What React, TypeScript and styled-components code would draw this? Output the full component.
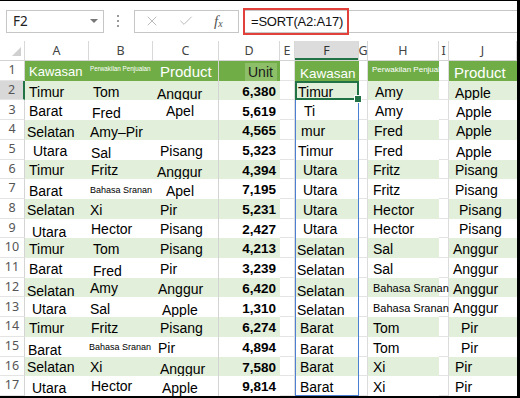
import React from 'react';
import styled, { createGlobalStyle, css } from 'styled-components';
import { X, Check } from 'lucide-react';

const GlobalStyle = createGlobalStyle`
  html, body { margin: 0; padding: 0; background: #fff; }
  body { font-family: 'Liberation Sans', Arial, sans-serif; }
  * { box-sizing: border-box; }
`;

const COLS = '25px 64px 64px 66px 61px 15px 64px 9px 71px 10px 68px';
const HEAD_GREEN = '#70ad47';
const BAND_GREEN = '#e2efda';
const XL_GREEN = '#217346';
const SPILL_BLUE = '#4a7fd4';

type Spec = { t: string; x?: number; dy?: number; size?: number };
type LeftRow = { a: Spec; b: Spec; c: Spec; d: string };
type RightRow = { f: Spec; h: Spec; j: Spec };

const leftRows: LeftRow[] = [
  { a: { t: 'Timur', x: 4 }, b: { t: 'Tom', x: 4 }, c: { t: 'Anggur', x: 4, dy: 2 }, d: '6,380' },
  { a: { t: 'Barat', x: 4 }, b: { t: 'Fred', x: 3, dy: 2 }, c: { t: 'Apel', x: 13 }, d: '5,619' },
  { a: { t: 'Selatan', x: 2, dy: 1 }, b: { t: 'Amy–Pir', x: 1, dy: 1 }, c: { t: '' }, d: '4,565' },
  { a: { t: 'Utara', x: 8 }, b: { t: 'Sal', x: 2, dy: 2 }, c: { t: 'Pisang', x: 7 }, d: '5,323' },
  { a: { t: 'Timur', x: 4 }, b: { t: 'Fritz', x: 2 }, c: { t: 'Anggur', x: 4, dy: 2 }, d: '4,394' },
  { a: { t: 'Barat', x: 4, dy: 1 }, b: { t: 'Bahasa Sranan', x: 1, size: 9 }, c: { t: 'Apel', x: 13, dy: 1 }, d: '7,195' },
  { a: { t: 'Selatan', x: 2 }, b: { t: 'Xi', x: 1 }, c: { t: 'Pir', x: 7 }, d: '5,231' },
  { a: { t: 'Utara', x: 7, dy: 2 }, b: { t: 'Hector', x: 2 }, c: { t: 'Pisang', x: 7 }, d: '2,427' },
  { a: { t: 'Timur', x: 4 }, b: { t: 'Tom', x: 4 }, c: { t: 'Pisang', x: 7 }, d: '4,213' },
  { a: { t: 'Barat', x: 4 }, b: { t: 'Fred', x: 4, dy: 2 }, c: { t: 'Pir', x: 7 }, d: '3,239' },
  { a: { t: 'Selatan', x: 2, dy: 2 }, b: { t: 'Amy', x: 1, dy: -1 }, c: { t: 'Anggur', x: 5 }, d: '6,420' },
  { a: { t: 'Utara', x: 7, dy: 1 }, b: { t: 'Sal', x: 1, dy: 1 }, c: { t: 'Apple', x: 9, dy: 2 }, d: '1,310' },
  { a: { t: 'Timur', x: 4 }, b: { t: 'Fritz', x: 2 }, c: { t: 'Pisang', x: 7 }, d: '6,274' },
  { a: { t: 'Barat', x: 3, dy: 2 }, b: { t: 'Bahasa Sranan', x: 0, size: 9 }, c: { t: 'Pir', x: 5 }, d: '4,894' },
  { a: { t: 'Selatan', x: 2 }, b: { t: 'Xi', x: 1 }, c: { t: 'Anggur', x: 7, dy: 2 }, d: '7,580' },
  { a: { t: 'Utara', x: 7, dy: 1 }, b: { t: 'Hector', x: 2, dy: -1 }, c: { t: 'Apple', x: 9, dy: 1 }, d: '9,814' },
];

const rightRows: RightRow[] = [
  { f: { t: 'Timur', x: 3 }, h: { t: 'Amy', x: 7 }, j: { t: 'Apple', x: 6, dy: 1 } },
  { f: { t: 'Ti', x: 9 }, h: { t: 'Amy', x: 7 }, j: { t: 'Apple', x: 7, dy: 1 } },
  { f: { t: 'mur', x: 6 }, h: { t: 'Fred', x: 6 }, j: { t: 'Apple', x: 7 } },
  { f: { t: 'Timur', x: 3 }, h: { t: 'Fred', x: 6 }, j: { t: 'Apple', x: 7, dy: 1 } },
  { f: { t: 'Utara', x: 8 }, h: { t: 'Fritz', x: 5 }, j: { t: 'Pisang', x: 6 } },
  { f: { t: 'Utara', x: 8 }, h: { t: 'Fritz', x: 5 }, j: { t: 'Pisang', x: 6 } },
  { f: { t: 'Utara', x: 8 }, h: { t: 'Hector', x: 5 }, j: { t: 'Pisang', x: 10 } },
  { f: { t: 'Utara', x: 8 }, h: { t: 'Hector', x: 5 }, j: { t: 'Pisang', x: 10 } },
  { f: { t: 'Selatan', x: 2, dy: 1 }, h: { t: 'Sal', x: 5 }, j: { t: 'Anggur', x: 4 } },
  { f: { t: 'Selatan', x: 2, dy: 1 }, h: { t: 'Sal', x: 5 }, j: { t: 'Anggur', x: 4 } },
  { f: { t: 'Selatan', x: 2, dy: 2 }, h: { t: 'Bahasa Sranan', x: 5, size: 11 }, j: { t: 'Anggur', x: 4 } },
  { f: { t: 'Selatan', x: 2, dy: 2 }, h: { t: 'Bahasa Sranan', x: 5, size: 11 }, j: { t: 'Anggur', x: 4 } },
  { f: { t: 'Barat', x: 5 }, h: { t: 'Tom', x: 5 }, j: { t: 'Pir', x: 12 } },
  { f: { t: 'Barat', x: 5, dy: 1 }, h: { t: 'Tom', x: 5 }, j: { t: 'Pir', x: 12 } },
  { f: { t: 'Barat', x: 5 }, h: { t: 'Xi', x: 5 }, j: { t: 'Pir', x: 6 } },
  { f: { t: 'Barat', x: 5 }, h: { t: 'Xi', x: 5 }, j: { t: 'Pir', x: 6 } },
];

const colLetters = ['A', 'B', 'C', 'D', 'E', 'F', 'G', 'H', 'I', 'J'];

const Frame = styled.div`
  width: 520px;
  height: 398px;
  border-top: 1px solid #000;
  border-right: 3px solid #000;
  border-bottom: 2px solid #000;
  display: flex;
  flex-direction: column;
  overflow: hidden;
  background: #fff;
`;

const FormulaBar = styled.div`
  height: 40px;
  flex: none;
  display: flex;
  align-items: center;
  padding: 0 0 0 6px;
`;

const NameBox = styled.div`
  width: 98px;
  height: 23px;
  border: 1px solid #c6c6c6;
  display: flex;
  align-items: center;
  justify-content: space-between;
  padding: 0 5px 0 6px;
  font-family: 'Noto Sans', 'Open Sans', sans-serif;
  font-size: 13.5px;
  color: #222;
`;

const Caret = styled.span`
  width: 0;
  height: 0;
  border-left: 4px solid transparent;
  border-right: 4px solid transparent;
  border-top: 4px solid #777;
`;

const Dots = styled.div`
  display: flex;
  flex-direction: column;
  gap: 3px;
  margin: 0 15px 0 13px;

  span {
    width: 2px;
    height: 2px;
    background: #9a9a9a;
  }
`;

const ButtonGroup = styled.div`
  width: 105px;
  height: 23px;
  border: 1px solid #c6c6c6;
  display: flex;
  align-items: center;
  padding-left: 9px;
  gap: 18px;
  color: #b0b0b0;
`;

const Fx = styled.span`
  font-family: 'Liberation Serif', 'Times New Roman', serif;
  font-style: italic;
  font-size: 15px;
  color: #555;
  margin-left: 2px;

  sub {
    font-size: 10px;
    vertical-align: -1px;
  }
`;

const FormulaInput = styled.div`
  flex: 1;
  height: 23px;
  margin-left: 4px;
  border-top: 1px solid #c6c6c6;
  border-bottom: 1px solid #c6c6c6;
  display: flex;
  align-items: center;
`;

const Highlight = styled.div`
  width: 106px;
  height: 27px;
  border: 2px solid #e2403a;
  display: flex;
  align-items: center;
  padding-left: 6px;
  font-size: 13px;
  letter-spacing: -0.2px;
  color: #111;
`;

const ColHeadRow = styled.div`
  height: 20px;
  flex: none;
  display: grid;
  grid-template-columns: ${COLS};
  border-bottom: 1px solid #d4d4d4;
`;

const ColHead = styled.div<{ $active?: boolean }>`
  display: flex;
  align-items: center;
  justify-content: center;
  font-family: 'Noto Sans', 'Open Sans', sans-serif;
  font-size: 12.5px;
  color: #444;
  border-right: 1px solid #d8d8d8;
  ${(p) =>
    p.$active &&
    css`
      background: #dcdcdc;
      box-shadow: inset 0 -2px ${XL_GREEN};
      color: #333;
    `}
`;

const Corner = styled.div`
  border-right: 1px solid #d8d8d8;
  display: flex;
  align-items: flex-end;
  justify-content: flex-end;
  padding: 0 3px 4px 0;

  span {
    width: 0;
    height: 0;
    border-left: 9px solid transparent;
    border-bottom: 9px solid #d0d0d0;
  }
`;

const Sheet = styled.div`
  flex: 1;
  min-height: 0;
  display: grid;
  grid-template-rows: repeat(17, minmax(0, 1fr));
`;

const Row = styled.div`
  min-height: 0;
  display: grid;
  grid-template-columns: ${COLS};
  grid-template-rows: minmax(0, 1fr);
`;

const RowHead = styled.div<{ $active?: boolean }>`
  display: flex;
  align-items: center;
  justify-content: center;
  font-family: 'Noto Sans', 'Open Sans', sans-serif;
  font-size: 12.5px;
  line-height: 1;
  color: #555;
  border-right: 1px solid #d4d4d4;
  border-bottom: 1px solid #e4e4e4;
  ${(p) =>
    p.$active &&
    css`
      background: #d8d8d8;
      border-right: 2px solid ${XL_GREEN};
    `}
`;

type Fill = 'head' | 'band' | 'plain';

const Cell = styled.div<{
  $fill: Fill;
  $x?: number;
  $dy?: number;
  $size?: number;
  $line?: boolean;
  $clip?: boolean;
}>`
  position: relative;
  display: flex;
  align-items: center;
  white-space: nowrap;
  min-width: 0;
  min-height: 0;
  line-height: 1;
  overflow: ${(p) => (p.$clip ? 'hidden' : 'visible')};
  padding-left: ${(p) => p.$x ?? 3}px;
  padding-top: ${(p) => 2 + Math.max(0, (p.$dy ?? 0) * 2)}px;
  padding-bottom: ${(p) => Math.max(0, -(p.$dy ?? 0) * 2)}px;
  font-size: ${(p) => p.$size ?? 14}px;
  color: #000;
  background: ${(p) => (p.$fill === 'head' ? HEAD_GREEN : p.$fill === 'band' ? BAND_GREEN : '#fff')};
  ${(p) => p.$line && 'border-right: 1px solid #d4d4d4;'}
`;

const HeadText = styled.span<{ $size: number }>`
  color: #fff;
  font-size: ${(p) => p.$size}px;
`;

const UnitTag = styled.span`
  background: #8dbf69;
  color: #1a1a1a;
  font-size: 14px;
  padding: 2px 4px 2px 3px;
`;

const NumCell = styled(Cell)`
  justify-content: flex-end;
  padding-left: 0;
  padding-right: 4px;
  font-weight: bold;
  font-size: 13.5px;
`;

const Blank = styled.div`
  background: #fff;
  border-right: 1px solid #dcdcdc;
  border-bottom: 1px solid #e4e4e4;
`;

const SpillCell = styled(Cell)<{ $selected?: boolean; $last?: boolean }>`
  z-index: ${(p) => (p.$selected ? 2 : 1)};
  box-shadow: ${(p) =>
    p.$selected
      ? `inset 0 0 0 2px ${XL_GREEN}`
      : `inset 1px 0 ${SPILL_BLUE}, inset -1px 0 ${SPILL_BLUE}${p.$last ? `, inset 0 -1px ${SPILL_BLUE}` : ''}`};

  ${(p) =>
    p.$selected &&
    css`
      &::after {
        content: '';
        position: absolute;
        right: -3px;
        bottom: -3px;
        width: 6px;
        height: 6px;
        background: ${XL_GREEN};
        border: 1px solid #fff;
      }
    `}
`;

const TinyHead = styled.span<{ $size: number }>`
  color: #fff;
  font-size: ${(p) => p.$size}px;
  align-self: flex-start;
  margin-top: 3px;
`;

export default function App() {
  return (
    <>
      <GlobalStyle />
      <Frame>
        <FormulaBar>
          <NameBox>
            F2
            <Caret />
          </NameBox>
          <Dots>
            <span />
            <span />
            <span />
          </Dots>
          <ButtonGroup>
            <X size={16} strokeWidth={1.3} />
            <Check size={16} strokeWidth={1.3} />
            <Fx>
              f<sub>x</sub>
            </Fx>
          </ButtonGroup>
          <FormulaInput>
            <Highlight>=SORT(A2:A17)</Highlight>
          </FormulaInput>
        </FormulaBar>

        <ColHeadRow>
          <Corner>
            <span />
          </Corner>
          {colLetters.map((l) => (
            <ColHead key={l} $active={l === 'F'}>
              {l}
            </ColHead>
          ))}
        </ColHeadRow>

        <Sheet>
          <Row>
            <RowHead>1</RowHead>
            <Cell $fill="head" $x={4}>
              <HeadText $size={13}>Kawasan</HeadText>
            </Cell>
            <Cell $fill="head" $x={1}>
              <TinyHead $size={6.3}>Perwakilan Penjualan</TinyHead>
            </Cell>
            <Cell $fill="head" $x={7} $line>
              <HeadText $size={15}>Product</HeadText>
            </Cell>
            <Cell $fill="head" $x={26}>
              <UnitTag>Unit</UnitTag>
            </Cell>
            <Blank />
            <Cell $fill="head" $x={5} $dy={2}>
              <HeadText $size={13.5}>Kawasan</HeadText>
            </Cell>
            <Blank />
            <Cell $fill="head" $x={4} $clip>
              <TinyHead $size={8}>Perwakilan Penjualan</TinyHead>
            </Cell>
            <Blank />
            <Cell $fill="head" $x={5} $dy={1}>
              <HeadText $size={15}>Product</HeadText>
            </Cell>
          </Row>

          {leftRows.map((r, i) => {
            const n = i + 2;
            const fill: Fill = n % 2 === 0 ? 'band' : 'plain';
            const rr = rightRows[i];
            return (
              <Row key={n}>
                <RowHead $active={n === 2}>{n}</RowHead>
                <Cell $fill={fill} $x={r.a.x} $dy={r.a.dy} $size={r.a.size}>
                  {r.a.t}
                </Cell>
                <Cell $fill={fill} $x={r.b.x} $dy={r.b.dy} $size={r.b.size}>
                  {r.b.t}
                </Cell>
                <Cell $fill={fill} $x={r.c.x} $dy={r.c.dy} $size={r.c.size} $line>
                  {r.c.t}
                </Cell>
                <NumCell $fill={fill}>{r.d}</NumCell>
                <Blank />
                <SpillCell
                  $fill={fill}
                  $x={rr.f.x}
                  $dy={rr.f.dy}
                  $selected={n === 2}
                  $last={n === 17}
                >
                  {rr.f.t}
                </SpillCell>
                <Blank />
                <Cell $fill={fill} $x={rr.h.x} $dy={rr.h.dy} $size={rr.h.size}>
                  {rr.h.t}
                </Cell>
                <Blank />
                <Cell $fill={fill} $x={rr.j.x} $dy={rr.j.dy} $size={rr.j.size}>
                  {rr.j.t}
                </Cell>
              </Row>
            );
          })}
        </Sheet>
      </Frame>
    </>
  );
}
